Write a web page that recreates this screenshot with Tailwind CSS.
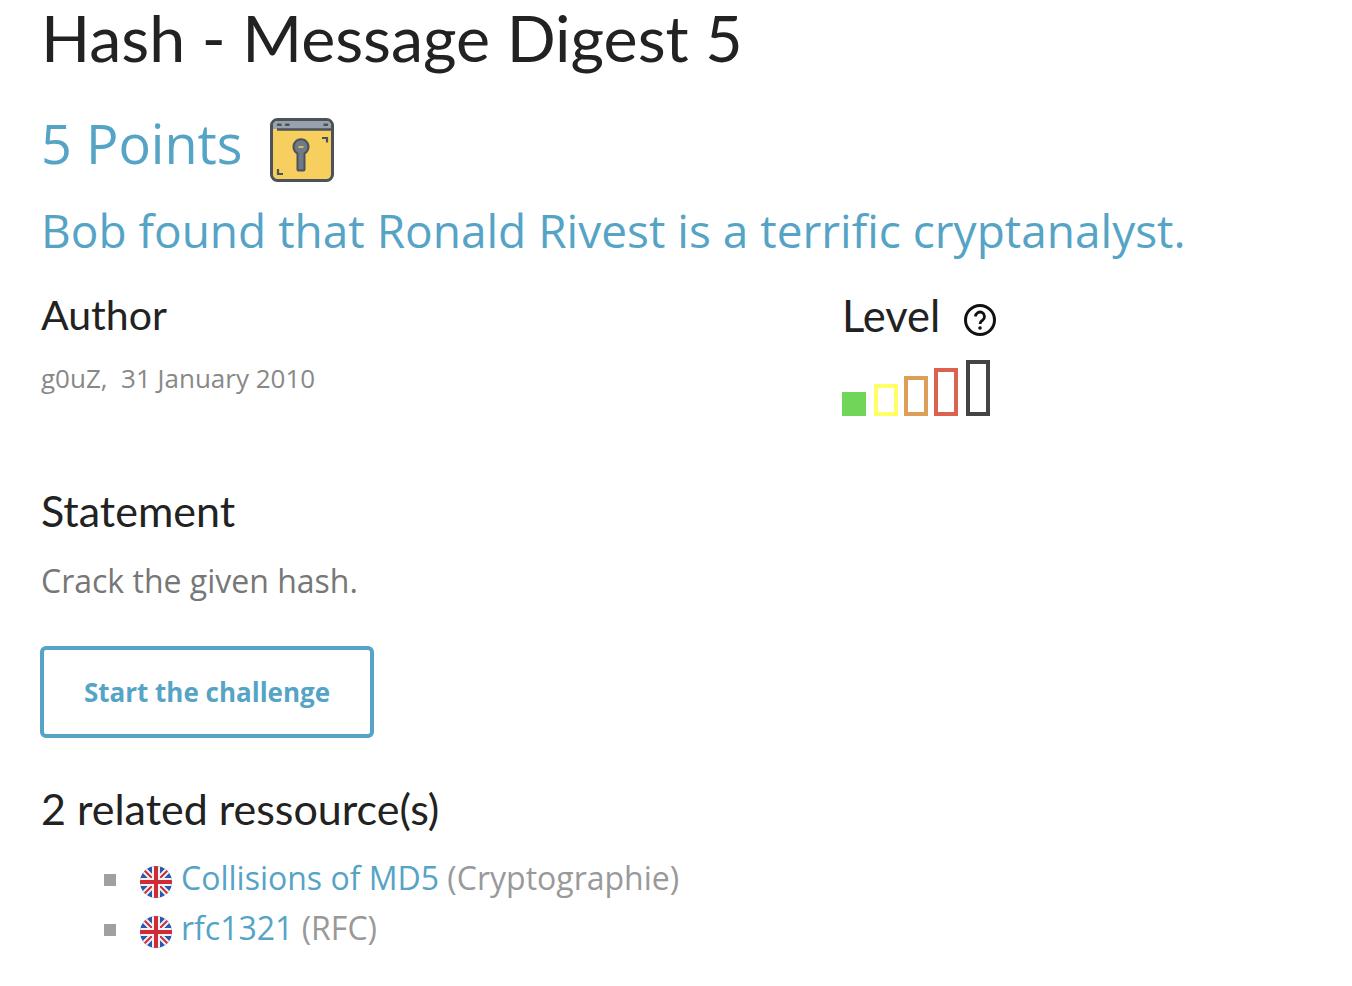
<!doctype html>
<html lang="en">
<head>
<meta charset="utf-8">
<title>Hash - Message Digest 5</title>
<script src="https://cdn.jsdelivr.net/npm/@tailwindcss/browser@4"></script>
</head>
<body class="bg-white font-['Open_Sans',sans-serif] overflow-hidden">
<svg class="hidden">
  <symbol id="uk" viewBox="0 0 32 32">
    <rect width="32" height="32" fill="#2a57b0"/>
    <path d="M0 0L32 32M32 0L0 32" stroke="#f2f2f2" stroke-width="6"/>
    <path d="M0 0L32 32M32 0L0 32" stroke="#cf2b37" stroke-width="2"/>
    <path d="M16 0V32M0 16H32" stroke="#f2f2f2" stroke-width="8"/>
    <path d="M16 0V32M0 16H32" stroke="#cf2b37" stroke-width="4"/>
  </symbol>
</svg>

<main class="pl-[41px] pr-8 w-[1352px]">
  <h1 class="font-['Lato',sans-serif] text-[64.5px] leading-[74px] text-[#222] h-[76px]">Hash - Message Digest 5</h1>

  <div class="flex items-start gap-[27px] mt-[35px] h-[64px]">
    <span class="text-[54px] leading-[64px] text-[#55a4c6]">5 Points</span>
    <svg class="w-[64px] h-[64px] mt-[7px]" viewBox="0 0 64 64">
      <rect x="1.500" y="1.500" width="61" height="61" rx="6" fill="#f6cf5e" stroke="#4b525a" stroke-width="3"/>
      <path d="M3 7.500a4.500 4.500 0 0 1 4.500-4.500h49a4.500 4.500 0 0 1 4.500 4.500v3.500H3z" fill="#98a2ad"/>
      <path d="M7 11.500H62" stroke="#4b525a" stroke-width="2.500"/>
      <path d="M8 6.700h2.500M16 6.700h2.500M54.500 6.700h2.500" stroke="#4b525a" stroke-width="2.500" stroke-linecap="round"/>
      <path d="M52 20h5v4.500M8 51v5h5" fill="none" stroke="#4b525a" stroke-width="2.200"/>
      <path d="M27.500 35.500a7.500 7.500 0 1 1 7 0V51.500a1 1 0 0 1-1 1h-5a1 1 0 0 1-1-1z" fill="#6f7a86" stroke="#4b525a" stroke-width="2"/>
      <path d="M29 29h4" stroke="#f6cf5e" stroke-width="1.500" stroke-linecap="round"/>
    </svg>
  </div>

  <h2 class="text-[46px] leading-[56px] text-[#55a4c6] mt-[27px] whitespace-nowrap">Bob found that Ronald Rivest is a terrific cryptanalyst.</h2>

  <div class="flex mt-[32px] h-[186px]">
    <section class="w-[801px]">
      <h3 class="font-['Lato',sans-serif] text-[41px] leading-[50px] text-[#222]">Author</h3>
      <p class="text-[26px] leading-[36px] text-[#888] mt-[20px]">g0uZ,&nbsp; 31 January 2010</p>
    </section>
    <section>
      <div class="flex items-center gap-[23px]">
        <h3 class="font-['Lato',sans-serif] text-[43.500px] leading-[50px] text-[#222]">Level</h3>
        <svg class="w-[34px] h-[34px] mt-[9px]" viewBox="0 0 34 34">
          <circle cx="17" cy="17" r="14.500" fill="none" stroke="#111" stroke-width="3"/>
          <path d="M12.500 13.500a4.500 4.500 0 1 1 7 3.800c-1.600 1-2.500 1.800-2.500 3.700" fill="none" stroke="#111" stroke-width="2.800"/>
          <circle cx="17" cy="25" r="1.800" fill="#111"/>
        </svg>
      </div>
      <div class="flex items-end mt-[20px]">
        <span class="w-[24px] h-[24px] bg-[#6fd65a]"></span>
        <span class="w-[24px] h-[32px] ml-[8px] border-4 border-[#ffff66]"></span>
        <span class="w-[24px] h-[40px] ml-[6px] border-4 border-[#dd9f58]"></span>
        <span class="w-[24px] h-[48px] ml-[6px] border-4 border-[#d9634f]"></span>
        <span class="w-[24px] h-[56px] ml-[8px] border-4 border-[#444]"></span>
      </div>
    </section>
  </div>

  <h3 class="font-['Lato',sans-serif] text-[43px] leading-[50px] text-[#222] mt-[10px]">Statement</h3>
  <p class="text-[32px] leading-[40px] text-[#777] mt-[25px]">Crack the given hash.</p>

  <a href="#" class="flex items-center justify-center w-[334px] h-[92px] mt-[45px] -ml-[1px] border-4 border-[#55a4c6] rounded-[6px] text-[26px] font-bold text-[#55a4c6]">Start the challenge</a>

  <h3 class="font-['Lato',sans-serif] text-[43px] leading-[50px] text-[#222] mt-[46px]">2 related ressource(s)</h3>

  <ul class="mt-[19px] ml-[63px] text-[32px] leading-[50px] text-[#999]">
    <li class="flex items-center">
      <span class="w-[12px] h-[12px] mt-[4px] bg-[#a0a0a0]"></span>
      <svg class="w-[32px] h-[32px] ml-[24px] mr-[9px] mt-[8px] rounded-full"><use href="#uk"/></svg>
      <a href="#" class="text-[#55a4c6]">Collisions of MD5</a>&nbsp;(Cryptographie)
    </li>
    <li class="flex items-center">
      <span class="w-[12px] h-[12px] mt-[4px] bg-[#a0a0a0]"></span>
      <svg class="w-[32px] h-[32px] ml-[24px] mr-[9px] mt-[8px] rounded-full"><use href="#uk"/></svg>
      <a href="#" class="text-[#55a4c6]">rfc1321</a>&nbsp;(RFC)
    </li>
  </ul>
</main>
</body>
</html>
